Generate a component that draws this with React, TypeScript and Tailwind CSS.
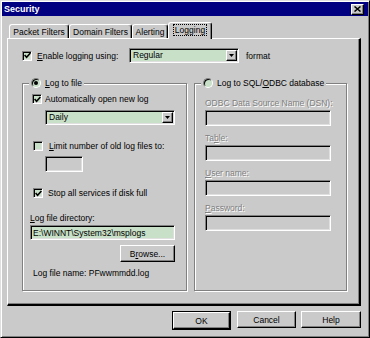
import type { ReactNode } from "react";

const raised =
  "border border-t-white border-l-white border-b-black border-r-black shadow-[inset_-1px_-1px_0_#808080]";
const sunken =
  "border border-t-[#808080] border-l-[#808080] border-b-white border-r-white shadow-[inset_1px_1px_0_#000,inset_-1px_-1px_0_#dfdfdf]";
const etched = "border border-[#808080] shadow-[inset_1px_1px_0_#fff,1px_1px_0_#fff]";
const disabledText = "text-[#808080] [text-shadow:1px_1px_0_#fff]";

function CheckBox({ checked }: { checked?: boolean }) {
  return (
    <div className={`w-[10px] h-[10px] shrink-0 bg-[#c8e0c8] flex items-center justify-center ${sunken}`}>
      {checked && (
        <svg width="7" height="7" viewBox="0 0 7 7">
          <path d="M0.6 3 L2.6 5.2 L6.4 1" fill="none" stroke="#000" strokeWidth="1.6" />
        </svg>
      )}
    </div>
  );
}

function Radio({ checked }: { checked?: boolean }) {
  return (
    <div className="w-[10px] h-[10px] shrink-0 rounded-full border border-t-[#808080] border-l-[#808080] border-b-white border-r-white bg-[#c8e0c8] shadow-[inset_1px_1px_0_#000] flex items-center justify-center">
      {checked && <div className="w-[4px] h-[4px] rounded-full bg-black" />}
    </div>
  );
}

function Combo({ value, className }: { value: string; className: string }) {
  return (
    <div className={`h-[15px] p-[1px] bg-[#c8e0c8] flex items-center ${sunken} ${className}`}>
      <span className="flex-1 pl-[2px] leading-[11px]">{value}</span>
      <div className={`w-[11px] h-full bg-[#cacaca] flex items-center justify-center ${raised}`}>
        <svg width="5" height="3" viewBox="0 0 5 3">
          <polygon points="0,0 5,0 2.5,3" fill="#000" />
        </svg>
      </div>
    </div>
  );
}

function Button({ children, className = "" }: { children: ReactNode; className?: string }) {
  return (
    <div className={`h-[17px] flex items-center justify-center bg-[#cacaca] ${raised} ${className}`}>
      {children}
    </div>
  );
}

function Tab({ label, width }: { label: string; width: string }) {
  return (
    <div
      className={`h-[14px] ${width} flex items-center justify-center rounded-t-[3px] border-t border-l border-r border-t-white border-l-white border-r-black shadow-[inset_-1px_0_0_#808080]`}
    >
      {label}
    </div>
  );
}

export default function App() {
  return (
    <div className="w-[370px] h-[338px] p-[1px] bg-[#cacaca] border border-t-[#dfdfdf] border-l-[#dfdfdf] border-r-black border-b-black shadow-[inset_1px_1px_0_#fff,inset_-1px_-1px_0_#808080] font-['Liberation_Sans',Arial,sans-serif] text-[8.5px] text-black leading-[12px] flex flex-col">
      {/* title bar */}
      <div className="h-[14px] bg-[#000080] flex items-center justify-between pl-[2px] pr-[4px]">
        <span className="text-white font-bold text-[9px]">Security</span>
        <div className={`w-[13px] h-[11px] bg-[#cacaca] flex items-center justify-center ${raised}`}>
          <svg width="7" height="6" viewBox="0 0 7 6">
            <path d="M0.5 0.5 L6.5 5.5 M6.5 0.5 L0.5 5.5" stroke="#000" strokeWidth="1.5" />
          </svg>
        </div>
      </div>

      {/* tabs */}
      <div className="mt-[6px] ml-[7px] h-[16px] flex items-end">
        <Tab label="Packet Filters" width="w-[60px]" />
        <Tab label="Domain Filters" width="w-[63px]" />
        <Tab label="Alerting" width="w-[36px]" />
        <div className="relative z-10 -mb-[1px] h-[17px] w-[44px] pb-[2px] bg-[#cacaca] flex items-center justify-center rounded-t-[3px] border-t border-l border-r border-t-white border-l-white border-r-black shadow-[inset_-1px_0_0_#808080]">
          <span className="px-[1px] outline outline-1 outline-dotted outline-black leading-[10px]">Logging</span>
        </div>
      </div>

      {/* panel */}
      <div className="ml-[5px] w-[354px] h-[268px] border-t border-l border-t-white border-l-white border-r-2 border-b-2 border-r-black border-b-black shadow-[inset_-1px_-1px_0_#808080] flex flex-col">
        <div className="mt-[9px] pl-[14px] h-[15px] flex items-center">
          <CheckBox checked />
          <span className="ml-[5px] w-[92px]">
            <u>E</u>nable logging using:
          </span>
          <Combo value="Regular" className="w-[110px]" />
          <span className="ml-[7px]">format</span>
        </div>

        <div className="mt-[20px] pl-[14px] flex gap-[7px]">
          {/* log to file */}
          <div className={`w-[165px] h-[208px] flex flex-col ${etched}`}>
            <div className="-mt-[7px] ml-[6px] px-[2px] self-start bg-[#cacaca] h-[12px] flex items-center gap-[4px]">
              <Radio checked />
              <span>
                <u>L</u>og to file
              </span>
            </div>
            <div className="mt-[4px] ml-[9px] h-[12px] flex items-center gap-[3px]">
              <CheckBox checked />
              <span>Automatically open new log</span>
            </div>
            <Combo value="Daily" className="mt-[5px] ml-[22px] w-[130px]" />
            <div className="mt-[15px] ml-[10px] h-[12px] flex items-center gap-[6px]">
              <CheckBox />
              <span>
                <u>L</u>imit number of old log files to:
              </span>
            </div>
            <div className={`mt-[4px] ml-[22px] w-[38px] h-[16px] bg-[#cacaca] ${sunken}`} />
            <div className="mt-[15px] ml-[10px] h-[12px] flex items-center gap-[5px]">
              <CheckBox checked />
              <span>Stop all services if disk full</span>
            </div>
            <span className="mt-[13px] ml-[7px]">
              <u>L</u>og file directory:
            </span>
            <div className={`mt-[1px] ml-[7px] w-[145px] h-[15px] bg-[#c8e0c8] flex items-center pl-[2px] ${sunken}`}>
              {"E:\\WINNT\\System32\\msplogs"}
            </div>
            <Button className="mt-[5px] ml-[97px] w-[55px]">
              B<u>r</u>owse...
            </Button>
            <span className="mt-[5px] ml-[10px]">Log file name: PFwwmmdd.log</span>
          </div>

          {/* log to database */}
          <div className={`w-[153px] h-[208px] flex flex-col ${etched}`}>
            <div className="-mt-[7px] ml-[6px] px-[2px] self-start bg-[#cacaca] h-[12px] flex items-center gap-[4px]">
              <Radio />
              <span>
                Log to SQL/<u>O</u>DBC database
              </span>
            </div>
            <span className={`mt-[8px] ml-[10px] ${disabledText}`}>ODBC Data Source Name (DSN):</span>
            <div className={`mt-[1px] ml-[10px] w-[126px] h-[16px] ${sunken}`} />
            <span className={`mt-[6px] ml-[10px] ${disabledText}`}>
              Ta<u>b</u>le:
            </span>
            <div className={`mt-[1px] ml-[10px] w-[126px] h-[16px] ${sunken}`} />
            <span className={`mt-[6px] ml-[10px] ${disabledText}`}>
              <u>U</u>ser name:
            </span>
            <div className={`mt-[1px] ml-[10px] w-[126px] h-[16px] ${sunken}`} />
            <span className={`mt-[6px] ml-[10px] ${disabledText}`}>
              <u>P</u>assword:
            </span>
            <div className={`mt-[1px] ml-[10px] w-[126px] h-[16px] ${sunken}`} />
          </div>
        </div>
      </div>

      {/* dialog buttons */}
      <div className="mt-[5px] pr-[7px] flex justify-end">
        <div className="border border-black">
          <Button className="w-[57px] h-[15px]">OK</Button>
        </div>
        <Button className="ml-[6px] w-[59px]">Cancel</Button>
        <Button className="ml-[5px] w-[60px]">Help</Button>
      </div>
    </div>
  );
}
